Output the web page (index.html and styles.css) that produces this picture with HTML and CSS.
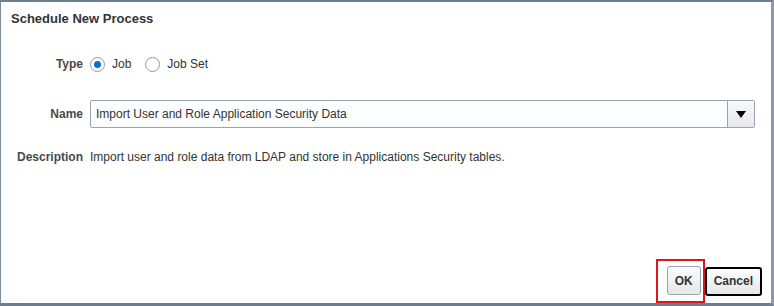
FILE: index.html
```html
<!DOCTYPE html>
<html lang="en">
  <head>
    <meta charset="UTF-8" />
    <title>Schedule New Process</title>
    <link rel="stylesheet" href="styles.css">
  </head>
  <body>
    <div class="dialog">
      <div class="title">Schedule New Process</div>
      <div class="form">
        <div class="label type-label">Type</div>
        <div class="radios">
          <label class="radio"><span class="dot checked"></span>Job</label>
          <label class="radio"><span class="dot"></span>Job Set</label>
        </div>
        <div class="label name-label">Name</div>
        <div class="select">
          <div class="select-text">Import User and Role Application Security Data</div>
          <div class="select-btn">
            <svg width="10" height="7" viewBox="0 0 10 7"><polygon points="0,0 10,0 5,7" fill="#000"></polygon></svg>
          </div>
        </div>
        <div class="label desc-label">Description</div>
        <div class="desc">Import user and role data from LDAP and store in Applications Security tables.</div>
      </div>
      <div class="footer">
        <div class="highlight"><button class="btn">OK</button></div>
        <button class="btn focused">Cancel</button>
      </div>
    </div>
  </body>
</html>
```

FILE: styles.css
```css
html, body {
  margin: 0;
  background: #fff;
}

body {
  font-family: "Liberation Sans", Arial, sans-serif;
  font-size: 12px;
  color: #333;
}

.dialog {
  box-sizing: border-box;
  width: 774px;
  height: 306px;
  border-top: 2px solid #6e7d8e;
  border-left: 1px solid #7d8a99;
  border-right: 3px solid #8d99a6;
  border-bottom: 3px solid #6e7d8e;
  display: flex;
  flex-direction: column;
}

.title {
  font-size: 13px;
  font-weight: bold;
  color: #333;
  padding: 9px 0 0 10px;
  line-height: 16px;
}

.form {
  display: grid;
  grid-template-columns: 82px 1fr;
  column-gap: 7px;
  align-items: center;
  padding-right: 16px;
  margin-top: 26px;
}

.label {
  text-align: right;
  font-weight: bold;
  color: #4a4a4a;
}

.radios {
  display: flex;
  gap: 14px;
  height: 22px;
  align-items: center;
}

.radio {
  display: flex;
  align-items: center;
  gap: 7px;
  color: #333;
}

.dot {
  box-sizing: border-box;
  width: 15px;
  height: 15px;
  border: 1px solid #8e9aa6;
  border-radius: 50%;
  background: #fff;
  position: relative;
}

.dot.checked::after {
  content: "";
  position: absolute;
  left: 3px;
  top: 3px;
  width: 7px;
  height: 7px;
  border-radius: 50%;
  background: #0572ce;
}

.name-label,
.select {
  margin-top: 25px;
}

.select {
  display: flex;
  height: 28px;
  box-sizing: border-box;
  border: 1px solid #97a3ae;
  border-radius: 2px;
  background: #fcfdfe;
}

.select-text {
  flex: 1;
  padding-left: 5px;
  line-height: 26px;
  color: #333;
}

.select-btn {
  width: 26px;
  border-left: 1px solid #97a3ae;
  background: linear-gradient(#f7f8f9, #e6e9ec);
  display: flex;
  align-items: center;
  justify-content: center;
}

.desc-label,
.desc {
  margin-top: 22px;
}

.footer {
  margin-top: auto;
  display: flex;
  justify-content: flex-end;
  align-items: center;
  padding: 0 9px 0 0;
}

.highlight {
  border: 2px solid #e0141c;
  padding: 5px 2px 6px 9px;
}

.btn {
  font-family: "Liberation Sans", Arial, sans-serif;
  font-size: 12px;
  font-weight: bold;
  color: #333;
  height: 29px;
  padding: 0 7px;
  border: 1px solid #97a3ae;
  border-radius: 3px;
  background: linear-gradient(#fbfcfc, #e4e8eb);
}

.btn.focused {
  border: 2px solid #000;
}
```
